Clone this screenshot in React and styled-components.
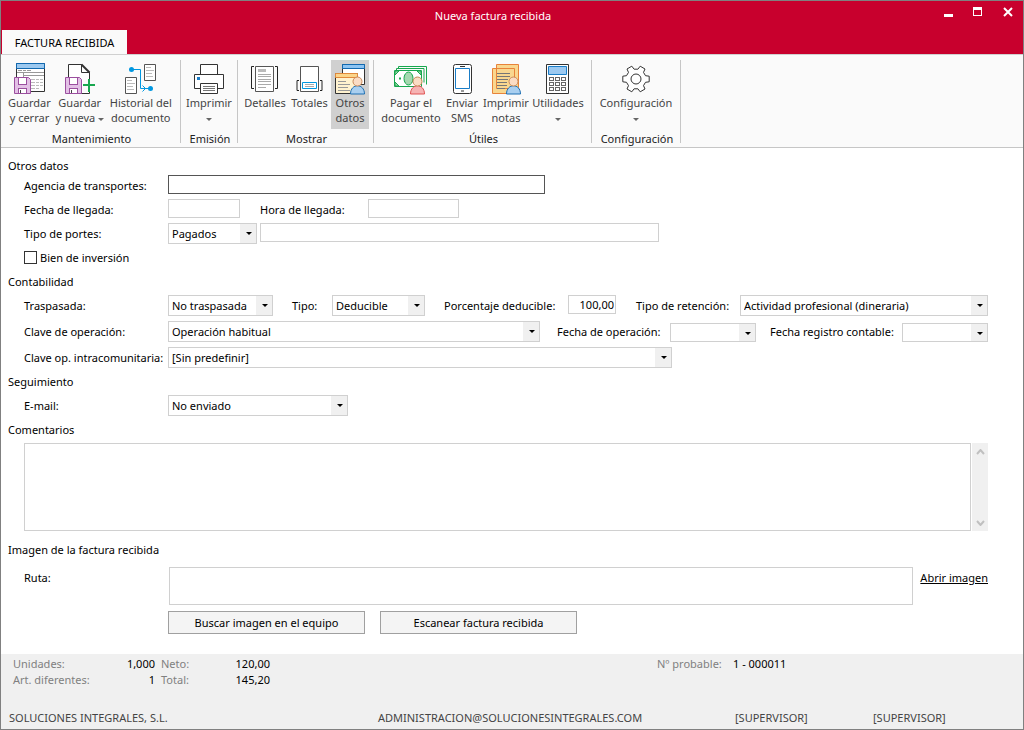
import styled, { createGlobalStyle } from "styled-components";

const GlobalStyle = createGlobalStyle`
  * {
    box-sizing: border-box;
  }
  body {
    margin: 0;
    background: #ffffff;
  }
  body, button, input, select, textarea {
    font-family: "Noto Sans", "Open Sans", sans-serif;
    font-size: 11px;
    color: #000000;
  }
`

/* ---------- icons ---------- */

const Floppy = () => (
  <g>
    <path d="M1.5 14.5h14l2 2v14h-16z" fill="#e3c0e6" stroke="#9b4f9f" />
    <rect x="5.5" y="14.5" width="8" height="7" fill="#fff" stroke="#9b4f9f" />
    <rect x="5.5" y="25.5" width="8" height="5" fill="#fff" stroke="#9b4f9f" />
    <path d="M7.5 27v3" stroke="#444" />
  </g>
)

const SaveCloseIcon = () => (
  <svg width="32" height="32" viewBox="0 0 32 32" fill="none">
    <path d="M3.5 0.5h28v28h-28z" fill="#fff" stroke="#333" />
    <path d="M3.5 0.5h28v5h-28z" fill="#9cc9f0" stroke="#1169b0" />
    <path d="M5 7.5h4M10 7.5h3M14 7.5h4M4 9.5h27M10.5 10v4M10 12.5h21" stroke="#999" />
    <path d="M18 16.5h4M23 16.5h3M27 16.5h3M18 19.5h4M23 19.5h3M27 19.5h3M18 22.5h4M23 22.5h3M27 22.5h3M18 25.5h4M23 25.5h3" stroke="#bbb" />
    <Floppy />
  </svg>
)

const SaveNewIcon = () => (
  <svg width="32" height="32" viewBox="0 0 32 32" fill="none">
    <path d="M4.5 1.5h13l8 8v21h-21z" fill="#fff" stroke="#333" />
    <path d="M17.500 1.500v8h8" stroke="#333" />
    <path d="M17.500 1.500l8 8" stroke="#333" strokeWidth="2" />
    <path d="M19 17h12v12h-12z" fill="#fafafa" />
    <path d="M25 16v13M19 22h12" stroke="#18a74f" strokeWidth="2" />
    <Floppy />
  </svg>
)

const HistoryIcon = () => (
  <svg width="32" height="32" viewBox="0 0 32 32" fill="none">
    <path d="M19.5 1.5h11v16h-11zM0.5 14.5h11v16h-11z" fill="#fff" stroke="#555" />
    <path d="M21 4.5h5M21 7.5h8M21 10.500h6M21 13.500h7M2 17.500h5M2 20.500h8M2 23.500h6M2 26.500h7" stroke="#bbb" />
    <path d="M7 6.500h8.500v19h10M17.500 22.500l3 3l-3 3" stroke="#0097e0" />
    <circle cx="6.500" cy="6.500" r="2.500" fill="#0097e0" />
    <circle cx="25.500" cy="25.500" r="2.500" fill="#0097e0" />
  </svg>
)

const PrinterIcon = () => (
  <svg width="32" height="32" viewBox="0 0 32 32" fill="none">
    <path d="M7.500 1.500h17v10h-17z" fill="#fff" stroke="#333" />
    <path d="M1.500 11.500h29v14h-29z" fill="#fff" stroke="#333" />
    <path d="M7.500 20.500h17v10h-17z" fill="#fff" stroke="#333" />
    <path d="M4 14h3v3h-3z" fill="#1a7dc7" />
    <path d="M10 23.500h12M10 25.500h12M10 27.500h12" stroke="#777" />
  </svg>
)

const DetailsIcon = () => (
  <svg width="32" height="32" viewBox="0 0 32 32" fill="none">
    <path d="M6.500 3.500h18v25h-18z" fill="#fff" stroke="#555" />
    <path d="M9 6h8v3h-8z" fill="#bbb" />
    <path d="M9 11.500h13M9 13.500h13M9 16.500h13M9 18.500h13M9 21.500h13M9 24.500h8" stroke="#aaa" />
    <path d="M5 3.500h-2.500v22h2.500M26 3.500h2.500v22h-2.500" stroke="#222" />
  </svg>
)

const TotalsIcon = () => (
  <svg width="32" height="32" viewBox="0 0 32 32" fill="none">
    <path d="M6.500 3.500h18v25h-18z" fill="#fff" stroke="#555" />
    <path d="M8.500 19.500h14v6h-14z" fill="#fff" stroke="#0097e0" />
    <path d="M11 21.500h9M11 23.500h9" stroke="#aaa" />
    <path d="M5 17.500h-2v10h2M26 17.500h2v10h-2" stroke="#222" />
  </svg>
)

const Person = ({ head = "#fbdcc4", line = "#c98a5a", body, edge }) => (
  <g>
    <path d="M16.500 31c0-11 14-11 14 0z" fill={body} stroke={edge} />
    <circle cx="23.500" cy="18.500" r="4.500" fill={head} stroke={line} />
  </g>
)

const OtherDataIcon = () => (
  <svg width="32" height="32" viewBox="0 0 32 32" fill="none">
    <path d="M8.500 1.500h22v20h-22z" fill="#fff" stroke="#333" />
    <path d="M8.500 1.500h22v4h-22z" fill="#8dc4f2" stroke="#1169b0" />
    <path d="M1.500 10.500h22v20h-22z" fill="#fff2cf" stroke="#333" />
    <path d="M1.500 10.500h22v4h-22z" fill="#fbd58a" stroke="#e08a3c" />
    <path d="M4 18.500h8M4 21.500h12M4 24.500h10M4 27.500h12" stroke="#999" />
    <Person body="#a9cff0" edge="#1d6fb3" />
  </svg>
)

const PayIcon = () => (
  <svg width="34" height="32" viewBox="0 0 34 32" fill="none">
    <path d="M4.500 5v-1.500h28v18M2.500 7v-1.500h27.500v14" stroke="#18a74f" />
    <path d="M0.500 7.500h27v16h-27z" fill="#fff" stroke="#18a74f" />
    <path d="M1 8h4l-4 4zM27 8h-4l4 4zM1 23v-4l4 4z" fill="#a5d8b0" stroke="#18a74f" />
    <ellipse cx="14.500" cy="15.500" rx="4.500" ry="6.500" fill="#a5d8b0" stroke="#18a74f" />
    <path d="M5 14.500h2v2h-2zM22 14.500h2v2h-2z" fill="#18a74f" />
    <Person body="#f6b3b3" edge="#e05252" />
  </svg>
)

const PhoneIcon = () => (
  <svg width="32" height="32" viewBox="0 0 32 32" fill="none">
    <rect x="7.500" y="1.500" width="18" height="29" rx="2" fill="#fff" stroke="#333" />
    <path d="M9.500 5.500h14v20h-14z" fill="#fff" stroke="#1a7dc7" />
    <path d="M14 3.500h5M15 28h3" stroke="#333" />
  </svg>
)

const NotesIcon = () => (
  <svg width="32" height="32" viewBox="0 0 32 32" fill="none">
    <path d="M6.500 1.500h22v24h-22zM2.500 5.500h22v25h-22z" fill="#f9d78f" stroke="#e8833a" />
    <path d="M7 10.500h13M7 13.500h13M7 16.500h11M7 19.500h10M7 22.500h10M7 25.500h8" stroke="#777" />
    <Person body="#a9cff0" edge="#1d6fb3" />
  </svg>
)

const CalculatorIcon = () => (
  <svg width="32" height="32" viewBox="0 0 32 32" fill="none">
    <path d="M4.500 1.500h22v29h-22z" fill="#fff" stroke="#333" />
    <path d="M6.500 3.500h18v8h-18z" fill="#9cc9f0" stroke="#1a7dc7" />
    {[14.5, 19.5, 24.5].map((y) =>
      [7.5, 13.5, 19.5].map((x) => (
        <rect key={`${x}-${y}`} x={x} y={y} width="4" height="3" stroke="#666" />
      ))
    )}
  </svg>
)

// six teeth, each one a pair of outer points between two valley points
const gearPoints = [0, 60, 120, 180, 240, 300]
  .flatMap((deg) => [[-19, 10], [-12, 13.5], [12, 13.5], [19, 10]].map(([turn, r]) => {
    const angle = ((deg + turn) * Math.PI) / 180
    return `${(16 + r * Math.cos(angle)).toFixed(1)},${(16 + r * Math.sin(angle)).toFixed(1)}`
  }))
  .join(" ")

const GearIcon = () => (
  <svg width="32" height="32" viewBox="0 0 32 32" fill="none" stroke="#333">
    <polygon points={gearPoints} fill="#fff" strokeLinejoin="round" />
    <circle cx="16" cy="16" r="5" />
  </svg>
)

/* ---------- window ---------- */

const Window = styled.div`
  min-height: 100vh;
  display: flex;
  flex-direction: column;
  border: 1px solid #808080;
`

const TitleBar = styled.header`
  background: #c8002d;
`

const Caption = styled.div`
  display: grid;
  grid-template-columns: 1fr auto 1fr;
  height: 29px;
  align-items: center;
  color: #ffffff;
`

const Title = styled.h1`
  grid-column: 2;
  margin: 0;
  padding-right: 38px;
  font-size: 11px;
  font-weight: 400;
`

const WindowButtons = styled.div`
  display: flex;
  justify-content: flex-end;
  align-self: start;
`

const WindowButton = styled.button`
  width: 30px;
  height: 22px;
  padding: 0;
  border: 0;
  background: none;
  display: flex;
  align-items: center;
  justify-content: center;
`

const Tab = styled.button`
  display: block;
  width: 125px;
  height: 24px;
  margin-left: 1px;
  padding: 0;
  border: 0;
  background: #fafafa;
`

/* ---------- ribbon ---------- */

const Ribbon = styled.nav`
  display: flex;
  height: 94px;
  padding: 5px 0 4px;
  background: #fafafa;
  border-top: 1px solid #d0d0d0;
  border-bottom: 1px solid #c6c6c6;
`

const Group = styled.section`
  display: flex;
  flex-direction: column;
  width: ${(props) => props.$w}px;
  border-right: 1px solid #c6c6c6;
`

const GroupButtons = styled.div`
  display: flex;
  flex: 1;
  padding: 0 4px;
  justify-content: ${(props) => (props.$center ? "center" : "flex-start")};
`

const GroupName = styled.div`
  margin-bottom: -3px;
  padding-left: 2px;
  line-height: 14px;
  text-align: center;
  color: #222222;
`

const RibbonButton = styled.button`
  display: flex;
  flex-direction: column;
  align-items: center;
  width: ${(props) => props.$w}px;
  height: 69px;
  padding: 3px 0 0;
  border: 0;
  background: ${(props) => (props.$active ? "#d0d0d0" : "transparent")};
  color: #444444;
  line-height: 15px;
  white-space: nowrap;
  svg {
    flex: none;
  }
`

const Caret = styled.span`
  display: inline-block;
  border: 3px solid transparent;
  border-top-color: #666666;
  border-bottom: 0;
  vertical-align: middle;
`

const Tool = ({ icon, lines, w, active, caret }) => (
  <RibbonButton type="button" $w={w} $active={active}>
    {icon}
    <span>{lines[0]}</span>
    <span>
      {lines[1]} {caret && <Caret />}
    </span>
  </RibbonButton>
)

/* ---------- form ---------- */

const Form = styled.form`
  flex: 1;
  padding: 10px 35px 20px 7px;
`

const Heading = styled.h2`
  margin: 0;
  font-size: 11px;
  font-weight: 400;
  line-height: ${(props) => (props.$first ? 16 : 24)}px;
`

const Row = styled.div`
  display: flex;
  align-items: flex-start;
  height: ${(props) => (props.$tall ? 26 : 24)}px;
  padding: 1px 0 0 16px;
`

const Label = styled.label`
  flex: none;
  width: ${(props) => props.$w}px;
  line-height: 22px;
  white-space: nowrap;
`

const TextBox = styled.input`
  width: ${(props) => props.$w}px;
  height: 19px;
  margin-right: ${(props) => props.$gap || 0}px;
  padding: 0 1px;
  border: 1px solid ${(props) => (props.$focus ? "#555555" : "#d0d0d0")};
  text-align: ${(props) => (props.$right ? "right" : "left")};
  outline: none;
`

const SelectBox = styled.span`
  position: relative;
  display: flex;
  width: ${(props) => props.$w}px;
  flex: ${(props) => (props.$grow ? "1" : "none")};
  height: ${(props) => (props.$date ? 19 : 21)}px;
  margin-top: ${(props) => (props.$date ? 2 : 0)}px;
  margin-right: ${(props) => props.$gap || 0}px;

  &::after {
    content: "";
    position: absolute;
    right: 5px;
    top: ${(props) => (props.$date ? 9 : 9)}px;
    border: 3px solid transparent;
    border-top-color: #000000;
    border-bottom: 0;
    pointer-events: none;
  }

  select {
    flex: 1;
    appearance: none;
    padding: 0 20px 0 3px;
    border: 1px solid #d0d0d0;
    border-radius: 0;
    background: linear-gradient(#f0f0f0, #f0f0f0) right / 16px 100% no-repeat #ffffff;
    outline: none;
  }
`

const Select = ({ id, value, ...box }) => (
  <SelectBox {...box}>
    <select id={id}>
      <option>{value}</option>
    </select>
  </SelectBox>
)

const Check = styled.input`
  appearance: none;
  width: 13px;
  height: 13px;
  margin: 4px 3px 0 0;
  border: 1px solid #333333;
  background: #ffffff;
`

const Comments = styled.div`
  display: flex;
  gap: 1px;
  height: 88px;
  margin: 1px 0 7px 16px;

  textarea {
    flex: 1;
    border: 1px solid #d0d0d0;
    resize: none;
    outline: none;
    overflow: hidden;
  }
`

const ScrollBar = styled.div`
  display: flex;
  flex-direction: column;
  justify-content: space-between;
  align-items: center;
  width: 16px;
  padding: 6px 0 5px;
  background: #f0f0f0;
`

const PathRow = styled.div`
  display: flex;
  padding: 5px 0 6px 16px;

  textarea {
    flex: 1;
    height: 38px;
    margin: 0 7px 0 1px;
    border: 1px solid #d0d0d0;
    resize: none;
    outline: none;
  }
`

const Link = styled.a`
  line-height: 22px;
  color: #000000;
  text-decoration: underline;
`

const Actions = styled.div`
  display: flex;
  gap: 15px;
  padding-left: 160px;
`

const ActionButton = styled.button`
  width: 197px;
  height: 23px;
  padding: 0;
  border: 1px solid #a0a0a0;
  background: #f4f4f4;
`

/* ---------- footer ---------- */

const Footer = styled.footer`
  height: 75px;
  padding-top: 2px;
  background: #f0f0f0;
`

const Summary = styled.dl`
  display: grid;
  grid-template-columns: 84px 58px 60px 55px 387px 76px 1fr;
  margin: 0;
  padding-left: 12px;
  line-height: 16px;

  dt {
    color: #808080;
    white-space: nowrap;
  }
  dd {
    margin: 0;
    text-align: right;
  }
  dt.amount {
    padding-left: 6px;
  }
  dt.number {
    grid-column: 6;
  }
  dd.number {
    text-align: left;
  }
`

const StatusBar = styled.div`
  display: grid;
  grid-template-columns: 369fr 357fr 138fr 150fr;
  padding: 22px 0 0 8px;
  line-height: 16px;
  color: #444444;
`

const App = () => {
  return (
    <>
      <GlobalStyle />
      <Window>
        <TitleBar>
          <Caption>
            <Title>Nueva factura recibida</Title>
            <WindowButtons>
              <WindowButton type="button" aria-label="Minimizar">
                <svg width="10" height="10"><path d="M1 7h9v3H1z" fill="#fff" /></svg>
              </WindowButton>
              <WindowButton type="button" aria-label="Maximizar">
                <svg width="10" height="10"><path d="M0 0h9v9H0zM1 3v5h7V3z" fill="#fff" fillRule="evenodd" /></svg>
              </WindowButton>
              <WindowButton type="button" aria-label="Cerrar">
                <svg width="10" height="10"><path d="M1 1l8 8M9 1l-8 8" stroke="#fff" strokeWidth="2" /></svg>
              </WindowButton>
            </WindowButtons>
          </Caption>
          <Tab type="button">FACTURA RECIBIDA</Tab>
        </TitleBar>

        <Ribbon>
          <Group $w={180}>
            <GroupButtons>
              <Tool w={50} icon={<SaveCloseIcon />} lines={["Guardar", "y cerrar"]} />
              <Tool w={53} icon={<SaveNewIcon />} lines={["Guardar", "y nueva"]} caret />
              <Tool w={72} icon={<HistoryIcon />} lines={["Historial del", "documento"]} />
            </GroupButtons>
            <GroupName>Mantenimiento</GroupName>
          </Group>
          <Group $w={57}>
            <GroupButtons $center>
              <Tool w={48} icon={<PrinterIcon />} lines={["Imprimir", ""]} caret />
            </GroupButtons>
            <GroupName>Emisión</GroupName>
          </Group>
          <Group $w={136}>
            <GroupButtons>
              <Tool w={46} icon={<DetailsIcon />} lines={["Detalles", ""]} />
              <Tool w={43} icon={<TotalsIcon />} lines={["Totales", ""]} />
              <Tool w={38} icon={<OtherDataIcon />} lines={["Otros", "datos"]} active />
            </GroupButtons>
            <GroupName>Mostrar</GroupName>
          </Group>
          <Group $w={218}>
            <GroupButtons>
              <Tool w={66} icon={<PayIcon />} lines={["Pagar el", "documento"]} />
              <Tool w={36} icon={<PhoneIcon />} lines={["Enviar", "SMS"]} />
              <Tool w={52} icon={<NotesIcon />} lines={["Imprimir", "notas"]} />
              <Tool w={52} icon={<CalculatorIcon />} lines={["Utilidades", ""]} caret />
            </GroupButtons>
            <GroupName>Útiles</GroupName>
          </Group>
          <Group $w={89}>
            <GroupButtons $center>
              <Tool w={80} icon={<GearIcon />} lines={["Configuración", ""]} caret />
            </GroupButtons>
            <GroupName>Configuración</GroupName>
          </Group>
        </Ribbon>

        <Form>
          <Heading $first>Otros datos</Heading>
          <Row>
            <Label $w={144} htmlFor="agencia">Agencia de transportes:</Label>
            <TextBox id="agencia" $w={377} $focus />
          </Row>
          <Row>
            <Label $w={144} htmlFor="fecha">Fecha de llegada:</Label>
            <TextBox id="fecha" $w={72} $gap={20} />
            <Label $w={108} htmlFor="hora">Hora de llegada:</Label>
            <TextBox id="hora" $w={91} />
          </Row>
          <Row>
            <Label $w={144} htmlFor="portes">Tipo de portes:</Label>
            <Select id="portes" value="Pagados" $w={89} $gap={3} />
            <TextBox aria-label="Detalle de portes" $w={399} />
          </Row>
          <Row>
            <Check type="checkbox" id="inversion" />
            <Label htmlFor="inversion">Bien de inversión</Label>
          </Row>

          <Heading>Contabilidad</Heading>
          <Row $tall>
            <Label $w={144} htmlFor="traspasada">Traspasada:</Label>
            <Select id="traspasada" value="No traspasada" $w={105} $gap={19} />
            <Label $w={40} htmlFor="tipo">Tipo:</Label>
            <Select id="tipo" value="Deducible" $w={93} $gap={19} />
            <Label $w={124} htmlFor="porcentaje">Porcentaje deducible:</Label>
            <TextBox id="porcentaje" defaultValue="100,00" $w={48} $gap={20} $right />
            <Label $w={104} htmlFor="retencion">Tipo de retención:</Label>
            <Select id="retencion" value="Actividad profesional (dineraria)" $grow />
          </Row>
          <Row $tall>
            <Label $w={144} htmlFor="clave">Clave de operación:</Label>
            <Select id="clave" value="Operación habitual" $w={372} $gap={17} />
            <Label $w={113} htmlFor="fechaOp">Fecha de operación:</Label>
            <Select id="fechaOp" value="" $w={86} $gap={14} $date />
            <Label $w={132} htmlFor="fechaReg">Fecha registro contable:</Label>
            <Select id="fechaReg" value="" $grow $date />
          </Row>
          <Row>
            <Label $w={144} htmlFor="intra">Clave op. intracomunitaria:</Label>
            <Select id="intra" value="[Sin predefinir]" $w={504} />
          </Row>

          <Heading>Seguimiento</Heading>
          <Row>
            <Label $w={144} htmlFor="email">E-mail:</Label>
            <Select id="email" value="No enviado" $w={180} />
          </Row>

          <Heading>Comentarios</Heading>
          <Comments>
            <textarea aria-label="Comentarios" />
            <ScrollBar aria-hidden="true">
              <svg width="9" height="6" fill="none" stroke="#c0c0c0" strokeWidth="2"><path d="M1 5l3.500-4l3.500 4" /></svg>
              <svg width="9" height="6" fill="none" stroke="#c0c0c0" strokeWidth="2"><path d="M1 1l3.500 4l3.500-4" /></svg>
            </ScrollBar>
          </Comments>

          <Heading>Imagen de la factura recibida</Heading>
          <PathRow>
            <Label $w={144} htmlFor="ruta">Ruta:</Label>
            <textarea id="ruta" />
            <Link href="#">Abrir imagen</Link>
          </PathRow>
          <Actions>
            <ActionButton type="button">Buscar imagen en el equipo</ActionButton>
            <ActionButton type="button">Escanear factura recibida</ActionButton>
          </Actions>
        </Form>

        <Footer>
          <Summary>
            <dt>Unidades:</dt>
            <dd>1,000</dd>
            <dt className="amount">Neto:</dt>
            <dd>120,00</dd>
            <dt className="number">Nº probable:</dt>
            <dd className="number">1 - 000011</dd>
            <dt>Art. diferentes:</dt>
            <dd>1</dd>
            <dt className="amount">Total:</dt>
            <dd>145,20</dd>
          </Summary>
          <StatusBar>
            <span>SOLUCIONES INTEGRALES, S.L.</span>
            <span>ADMINISTRACION@SOLUCIONESINTEGRALES.COM</span>
            <span>[SUPERVISOR]</span>
            <span>[SUPERVISOR]</span>
          </StatusBar>
        </Footer>
      </Window>
    </>
  )
}

export default App
